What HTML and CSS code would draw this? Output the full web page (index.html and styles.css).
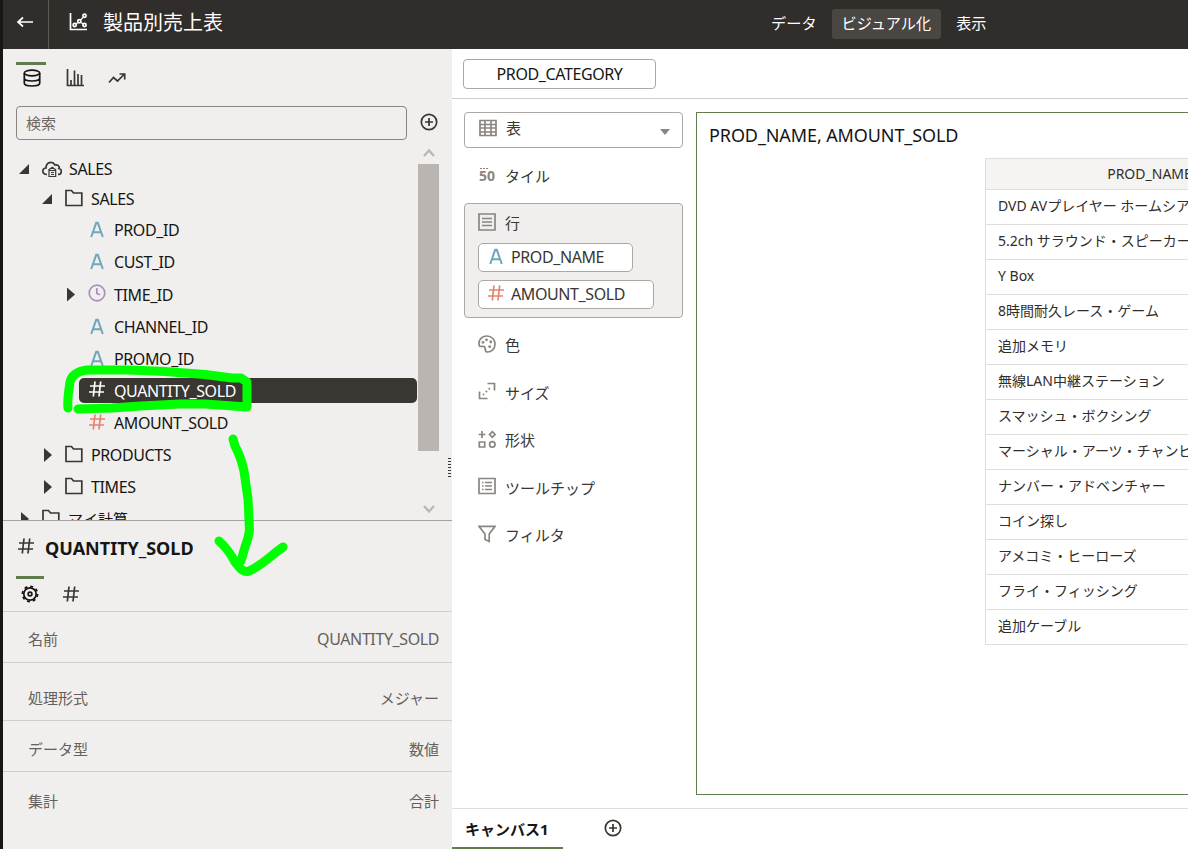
FILE: index.html
```html
<!DOCTYPE html>
<html lang="ja">
<head>
  <meta charset="UTF-8">
  <meta name="viewport" content="width=device-width, initial-scale=1.0">
  <title>製品別売上表</title>
  <link rel="stylesheet" href="styles.css">
</head>
<body>
  <svg class="symbols">
    <symbol id="hash" viewBox="0 0 18 18"><path d="M7 1.5L5.3 16.5M12.7 1.5L11 16.5M2 6H17M1 12H16"/></symbol>
    <symbol id="alpha" viewBox="0 0 18 18"><path d="M3.2 17L8.2 2.8H9.8L14.8 17M5.1 12.3H12.9"/></symbol>
    <symbol id="folder" viewBox="0 0 18 18"><path d="M1 16.5V1.5H6.5L8.5 4H16.8V16.5Z"/></symbol>
    <symbol id="plus" viewBox="0 0 18 18"><circle cx="9" cy="9" r="7.7"/><path d="M9 5V13M5 9H13"/></symbol>
  </svg>

  <div class="app">
    <header class="header">
      <div class="back">
        <svg class="icon" viewBox="0 0 18 18"><path d="M17 9H2M7 4.5L2 9L7 13.5"/></svg>
      </div>
      <svg class="icon title-icon" viewBox="0 0 18 18"><path d="M1.5 0V16.5H18"/><path class="thin" d="M7 11L9 9.5M11.5 7L14.5 4M12 9.5L14 11"/><circle cx="5.7" cy="12" r="1.6"/><circle cx="10.3" cy="8.3" r="1.6"/><circle cx="15.5" cy="2.7" r="1.6"/><circle cx="15.5" cy="12" r="1.6"/></svg>
      <h1 class="title">製品別売上表</h1>
      <nav class="modes">
        <span class="mode">データ</span>
        <span class="mode active">ビジュアル化</span>
        <span class="mode">表示</span>
      </nav>
    </header>

    <div class="body">
      <aside class="sidebar">
        <div class="side-tabs">
          <span class="side-tab active"><svg class="icon" viewBox="0 0 18 18"><ellipse cx="9" cy="4" rx="7.7" ry="2.8"/><path d="M1.3 4V14C1.3 18 16.7 18 16.7 14V4M1.3 9C1.3 13 16.7 13 16.7 9"/></svg></span>
          <span class="side-tab"><svg class="icon" viewBox="0 0 18 18"><path d="M1.5 0V16.5H18M5 16V11M8.5 16V1.5M12 16V5M15.5 16V6"/></svg></span>
          <span class="side-tab"><svg class="icon" viewBox="0 0 18 18"><path d="M1 13.5L5.5 8.5L9.5 12L16.5 5M11.5 5H16.7V10.5"/></svg></span>
        </div>
        <div class="search-row">
          <div class="search">検索</div>
          <svg class="icon"><use href="#plus"/></svg>
        </div>

        <div class="tree-area">
          <div class="tree">
            <div class="node root"><i class="arrow open"></i><svg class="icon cloud" viewBox="0 0 20 18"><path d="M5 14.5C-.5 14.5-.3 8 4 8C4 2 10.5.5 13 5C17 4 17.5 8 17 8.5C20.5 9.5 20 14.5 16 14.5"/><path class="thin" d="M6.5 10L10.3 7.3L14 10M7 10.5H13.7V16.5H7ZM9 12.5H12M9 14.5H12"/></svg><span class="name">SALES</span></div>
            <div class="node level1 first"><i class="arrow open"></i><svg class="icon"><use href="#folder"/></svg><span class="name">SALES</span></div>
            <div class="node level2"><i class="arrow none"></i><svg class="icon alpha"><use href="#alpha"/></svg><span class="name">PROD_ID</span></div>
            <div class="node level2"><i class="arrow none"></i><svg class="icon alpha"><use href="#alpha"/></svg><span class="name">CUST_ID</span></div>
            <div class="node level2 time"><i class="arrow"></i><svg class="icon clock" viewBox="0 0 18 18"><circle cx="9" cy="9" r="7.8"/><path d="M8.8 4V9.5L12 10.7"/></svg><span class="name">TIME_ID</span></div>
            <div class="node level2"><i class="arrow none"></i><svg class="icon alpha"><use href="#alpha"/></svg><span class="name">CHANNEL_ID</span></div>
            <div class="node level2"><i class="arrow none"></i><svg class="icon alpha"><use href="#alpha"/></svg><span class="name">PROMO_ID</span></div>
            <div class="node level2"><div class="selected"><svg class="icon"><use href="#hash"/></svg><span class="name">QUANTITY_SOLD</span></div></div>
            <div class="node level2"><i class="arrow none"></i><svg class="icon measure"><use href="#hash"/></svg><span class="name">AMOUNT_SOLD</span></div>
            <div class="node level1"><i class="arrow"></i><svg class="icon"><use href="#folder"/></svg><span class="name">PRODUCTS</span></div>
            <div class="node level1"><i class="arrow"></i><svg class="icon"><use href="#folder"/></svg><span class="name">TIMES</span></div>
            <div class="node root"><i class="arrow"></i><svg class="icon"><use href="#folder"/></svg><span>マイ計算</span></div>
          </div>
          <div class="scrollbar">
            <svg class="scroll-arrow" viewBox="0 0 12 9"><path d="M1 8L6 2.5L11 8"/></svg>
            <div class="thumb"></div>
            <svg class="scroll-arrow" viewBox="0 0 12 9"><path d="M1 1L6 6.5L11 1"/></svg>
          </div>
          <div class="grip"></div>
        </div>

        <section class="details">
          <h2 class="details-title"><svg class="icon"><use href="#hash"/></svg>QUANTITY_SOLD</h2>
          <div class="details-tabs">
            <span class="details-tab active"><svg class="icon" viewBox="0 0 18 18"><circle cx="9" cy="9" r="6.2"/><circle cx="9" cy="9" r="1.9"/><circle class="teeth" cx="9" cy="9" r="7.6"/></svg></span>
            <span class="details-tab"><svg class="icon"><use href="#hash"/></svg></span>
          </div>
          <div class="prop first"><span>名前</span><span class="name">QUANTITY_SOLD</span></div>
          <div class="prop format"><span>処理形式</span><span>メジャー</span></div>
          <div class="prop"><span>データ型</span><span>数値</span></div>
          <div class="prop last"><span>集計</span><span>合計</span></div>
        </section>
      </aside>

      <main class="main">
        <div class="filter-bar">
          <span class="filter name">PROD_CATEGORY</span>
        </div>
        <div class="workspace">
          <div class="grammar">
            <div class="viz-select">
              <svg class="icon" viewBox="0 0 18 18"><path d="M1 1.5H17V16.5H1ZM1 5.5H17M1 9H17M1 13H17M6 1V17M12 1V17"/></svg>
              <span>表</span>
              <i class="caret"></i>
            </div>
            <div class="slot tile"><span class="fifty">50</span><span>タイル</span></div>
            <div class="rows-slot">
              <div class="rows-head"><svg class="icon" viewBox="0 0 18 18"><path d="M1 1H17V17H1ZM4 5.5H14M4 9H14M4 12.5H14"/></svg><span>行</span></div>
              <div class="pill"><svg class="icon alpha"><use href="#alpha"/></svg><span class="name">PROD_NAME</span></div>
              <div class="pill wide"><svg class="icon measure"><use href="#hash"/></svg><span class="name">AMOUNT_SOLD</span></div>
            </div>
            <div class="slots">
              <div class="slot"><svg class="icon" viewBox="0 0 18 18"><path d="M1.5 11C-.5 5 4 1 9 1C14 1 17 5 17 9C17 14 13.5 17 9.5 17C6.5 17 7.5 14.5 7 12.5C6 10 3.5 12.5 1.5 11Z"/><g class="dots"><circle cx="5" cy="7.3" r="1.4"/><circle cx="8.5" cy="4.8" r="1.4"/><circle cx="12.8" cy="7" r="1.4"/><circle cx="11.7" cy="11.7" r="1.4"/></g></svg><span>色</span></div>
              <div class="slot"><svg class="icon" viewBox="0 0 18 18"><path d="M9.5 1.5H16.5V8.5M1.5 9.5V16.5H9.5"/><path d="M5 13L13.5 4.5" stroke-dasharray="1.7 2.3"/></svg><span>サイズ</span></div>
              <div class="slot"><svg class="icon" viewBox="0 0 18 18"><path d="M4 1V8M.7 4.5H7.3M14.3 1.7L17 4.5L14.3 7.3L11.6 4.5ZM1.3 12H6.7V17H1.3Z"/><circle cx="14.3" cy="14.4" r="2.7"/></svg><span>形状</span></div>
              <div class="slot"><svg class="icon" viewBox="0 0 18 18"><path d="M1 1.5H17V16.5H1ZM7 5.5H14M7 9H14M7 12.5H14M4 5.5H5.6M4 9H5.6M4 12.5H5.6"/></svg><span>ツールチップ</span></div>
              <div class="slot"><svg class="icon" viewBox="0 0 18 18"><path d="M1 1.3H17L11.2 9V16.5L7 14.5V9Z"/></svg><span>フィルタ</span></div>
            </div>
          </div>

          <div class="viz">
            <h3 class="viz-title">PROD_NAME, AMOUNT_SOLD</h3>
            <div class="table">
              <div class="th">PROD_NAME</div>
              <div class="td">DVD AVプレイヤー ホームシアター</div>
              <div class="td">5.2ch サラウンド・スピーカー</div>
              <div class="td">Y Box</div>
              <div class="td">8時間耐久レース・ゲーム</div>
              <div class="td">追加メモリ</div>
              <div class="td">無線LAN中継ステーション</div>
              <div class="td">スマッシュ・ボクシング</div>
              <div class="td">マーシャル・アーツ・チャンピオン</div>
              <div class="td">ナンバー・アドベンチャー</div>
              <div class="td">コイン探し</div>
              <div class="td">アメコミ・ヒーローズ</div>
              <div class="td">フライ・フィッシング</div>
              <div class="td">追加ケーブル</div>
            </div>
          </div>
        </div>
        <footer class="canvas-tabs">
          <span class="canvas-tab">キャンバス1</span>
          <svg class="icon"><use href="#plus"/></svg>
        </footer>
      </main>
    </div>
  </div>

  <!-- hand-drawn marker over the selected column -->
  <svg class="marker" viewBox="0 0 1188 849">
    <path d="M68 408C67 398 69 390 70 382C72 374 79 371 87 370H130L165 371.5L205 374.5L232 378H241L247 382V407L233 406L205 404L180 404L140 406L112 408L78 409"/>
    <path d="M233 439L235 446C240 455 242 462 244 471L248 499L249.5 530L248 538L245 547L241 561"/>
    <path d="M219 541C229 550 231 555 235 562C240 569 244 573 249 571C261 566 269 557 283 547"/>
  </svg>
</body>
</html>
```
FILE: styles.css
```css
* {
  box-sizing: border-box;
}

body {
  margin: 0;
  width: 1188px;
  height: 849px;
  overflow: hidden;
  font-family: "Noto Sans", "Noto Sans CJK JP", sans-serif;
  font-size: 15px;
  color: #161513;
  background: #fff;
}

h1, h2, h3 {
  margin: 0;
  font-weight: 400;
}

.symbols {
  display: none;
}

.icon {
  width: 18px;
  height: 18px;
  flex: none;
  fill: none;
  stroke: #3a3631;
  stroke-width: 1.7;
}

.icon .thin {
  stroke-width: 1.2;
}

.icon.alpha {
  stroke: #6fa6bd;
  stroke-width: 2;
}

.icon.measure {
  stroke: #e58271;
}

.icon.clock {
  stroke: #ab8dbd;
}

/* column names */
.name {
  font-size: 16px;
  letter-spacing: -0.4px;
}

.app {
  height: 849px;
  display: flex;
  flex-direction: column;
  border-left: 3px solid #161616;
}

/* header */
.header {
  height: 49px;
  flex: none;
  display: flex;
  align-items: center;
  background: #312d2a;
  color: #fff;
}

.header .icon {
  stroke: #fff;
}

.back {
  width: 46px;
  height: 49px;
  padding: 13px 0 0 13px;
  border-right: 1px solid #5d5955;
}

.title-icon {
  margin: 0 0 5px 20px;
}

.title {
  width: 658px;
  margin: -6px 0 0 16px;
  font-size: 20px;
}

.modes {
  display: flex;
  margin-top: -2px;
}

.mode {
  height: 30px;
  padding: 0 10px;
  border-radius: 3px;
  font-size: 15.2px;
  line-height: 28px;
  white-space: nowrap;
}

.mode.active {
  margin: 0 5px;
  background: #4a4642;
}

.body {
  flex: 1;
  display: flex;
  min-height: 0;
}

/* data panel */
.sidebar {
  width: 449px;
  flex: none;
  display: flex;
  flex-direction: column;
  background: #f0efed;
}

.side-tabs {
  height: 57px;
  padding: 13px 0 0 13px;
  display: flex;
  gap: 12.5px;
}

.side-tab {
  width: 30px;
  height: 30px;
  padding: 4px 0 0 7px;
  border-top: 3px solid transparent;
}

.side-tab.active {
  border-color: #5f7d4f;
}

.side-tab.active .icon {
  stroke: #161513;
}

.search-row {
  display: flex;
  height: 34px;
  padding-left: 13px;
  gap: 13px;
}

.search-row .icon {
  margin-top: 7px;
}

.search {
  width: 391px;
  border: 1px solid #8b8580;
  border-radius: 4px;
  padding-left: 9px;
  line-height: 33px;
  color: #6b6661;
}

.tree-area {
  height: 380px;
  flex: none;
  display: flex;
  position: relative;
}

.tree {
  width: 415px;
  padding-top: 14px;
  overflow: hidden;
}

.node {
  height: 32px;
  display: flex;
  align-items: center;
  line-height: 20px;
}

.node.root {
  padding-left: 16px;
}

.node.first,
.node.root:first-child {
  height: 30px;
}

.node.level1 {
  padding-left: 39px;
}

.node.level2 {
  padding-left: 62px;
}

.node.time {
  height: 33px;
}

.node .icon {
  margin: -3px 8px 0 6px;
}

.node .icon.cloud {
  width: 20px;
  margin: -1px 7px 0 6px;
}

.arrow {
  width: 17px;
  height: 14px;
  flex: none;
  background: #3a3631;
  clip-path: polygon(2px 0, 10px 7px, 2px 14px);
}

.arrow.open {
  clip-path: polygon(10px 2px, 10px 12px, 0 12px);
}

.arrow.none {
  background: none;
}

.selected {
  width: 338px;
  height: 25px;
  margin: -1px 0 0 14px;
  padding-left: 3px;
  display: flex;
  align-items: center;
  border-radius: 5px;
  background: #3a3631;
  color: #fff;
}

.node .selected .icon {
  stroke: #fff;
}

.scrollbar {
  width: 21px;
  padding: 8px 0 6px;
  display: flex;
  flex-direction: column;
  align-items: center;
}

.scroll-arrow {
  width: 12px;
  height: 9px;
  fill: none;
  stroke: #bbb5b1;
  stroke-width: 2.2;
}

.thumb {
  width: 21px;
  height: 287px;
  margin: 7px 0 54px;
  background: #bbb5b1;
}

.grip {
  position: absolute;
  right: 1px;
  top: 318px;
  width: 3px;
  height: 20px;
  background: repeating-linear-gradient(#3a3631 0 1px, transparent 1px 3px);
}

/* column details */
.details {
  flex: 1;
  border-top: 1px solid #a5a19e;
}

.details-title {
  height: 55px;
  padding: 0 0 2px 14px;
  display: flex;
  align-items: center;
  gap: 10px;
  font-size: 18px;
  font-weight: 700;
}

.details-title .icon {
  margin-top: -4px;
}

.details-tabs {
  height: 36px;
  display: flex;
  gap: 13px;
  padding-left: 13px;
  border-bottom: 1px solid #d0cecb;
}

.details-tab {
  width: 28px;
  padding: 6px 0 0 5px;
  border-top: 3px solid transparent;
}

.details-tab.active {
  border-color: #5f7d4f;
}

.details-tab.active .icon {
  stroke: #161513;
}

.details-tab .teeth {
  stroke-dasharray: 2.98 2.98;
}

.prop {
  height: 51px;
  padding: 5px 13px 0 25px;
  display: flex;
  justify-content: space-between;
  align-items: center;
  border-bottom: 1px solid #d0cecb;
  color: #65605b;
}

.prop.first {
  padding-top: 3px;
}

.prop.format {
  height: 58px;
  padding-top: 12px;
}

.prop.last {
  border: none;
}

/* visualization */
.main {
  flex: 1;
  min-width: 0;
  display: flex;
  flex-direction: column;
}

.filter-bar {
  height: 50px;
  padding: 10px 11px;
  border-bottom: 1px solid #d0cecb;
}

.filter {
  display: block;
  width: 193px;
  height: 30px;
  border: 1px solid #aca7a3;
  border-radius: 4px;
  text-align: center;
  line-height: 28px;
}

.workspace {
  flex: 1;
  display: flex;
  gap: 13px;
  padding: 13px 0 13px 12px;
  overflow: hidden;
}

.grammar {
  width: 219px;
  flex: none;
  color: #3a3631;
}

.grammar .icon:not(.alpha):not(.measure) {
  stroke: #8b8580;
}

.grammar .dots {
  fill: #8b8580;
  stroke: none;
}

.viz-select {
  height: 36px;
  padding: 0 12px 5px 14px;
  display: flex;
  align-items: center;
  gap: 9px;
  border: 1px solid #aca7a3;
  border-radius: 4px;
}

.caret {
  margin: 9px 0 0 auto;
  border: 5px solid transparent;
  border-top: 6px solid #8b8580;
  border-bottom: 0;
}

.slot {
  height: 47.5px;
  padding-left: 14px;
  display: flex;
  align-items: center;
  gap: 9px;
}

.slot .icon {
  margin-top: -2px;
}

.slot.tile {
  height: 55px;
}

.fifty {
  width: 18px;
  padding-left: 1px;
  font-size: 14px;
  font-weight: 700;
  line-height: 16px;
  color: #8b8580;
  background: linear-gradient(90deg, #8b8580 0 2px, transparent 2px 3px, #8b8580 3px 5px, transparent 5px 6px, #8b8580 6px 8px, transparent 8px) 2px 0 / 16px 1px no-repeat;
}

.rows-slot {
  height: 115px;
  padding: 7px 13px;
  border: 1px solid #aca7a3;
  border-radius: 4px;
  background: #f0efed;
}

.rows-head {
  height: 22px;
  margin-bottom: 10px;
  display: flex;
  align-items: center;
  gap: 9px;
}

.pill {
  width: 155px;
  height: 29px;
  margin-bottom: 8px;
  padding-left: 8px;
  display: flex;
  align-items: center;
  gap: 6px;
  border: 1px solid #aca7a3;
  border-radius: 5px;
  background: #fff;
}

.pill.wide {
  width: 176px;
}

.pill .icon {
  margin-top: -3px;
}

.pill .name {
  margin-top: -1px;
}

.slots {
  padding-top: 3px;
}

.viz {
  width: 900px;
  flex: none;
  padding: 10px 12px;
  border: 1px solid #5f7d4f;
}

.viz-title {
  height: 35px;
  font-size: 18px;
  letter-spacing: -0.1px;
  line-height: 25px;
}

.table {
  width: 329px;
  margin-left: 276px;
  border: 1px solid #dfdedc;
  border-bottom: none;
  font-size: 14px;
  color: #312d2a;
}

.th,
.td {
  height: 35px;
  border-bottom: 1px solid #dfdedc;
  line-height: 31px;
  white-space: nowrap;
}

.th {
  height: 31px;
  background: #f5f4f2;
  text-align: center;
  line-height: 30px;
}

.td {
  padding-left: 12px;
}

.canvas-tabs {
  height: 41px;
  display: flex;
  align-items: center;
  border-top: 1px solid #dfdedc;
}

.canvas-tab {
  width: 111px;
  height: 40px;
  padding-left: 13px;
  border-bottom: 2px solid #5f7d4f;
  font-weight: 700;
  line-height: 40px;
}

.canvas-tabs .icon {
  margin: -2px 0 0 41px;
}

.marker {
  position: absolute;
  left: 0;
  top: 0;
  width: 1188px;
  height: 849px;
  fill: none;
  stroke: #00ff00;
  stroke-width: 9;
  stroke-linecap: round;
  stroke-linejoin: round;
  pointer-events: none;
}
```
